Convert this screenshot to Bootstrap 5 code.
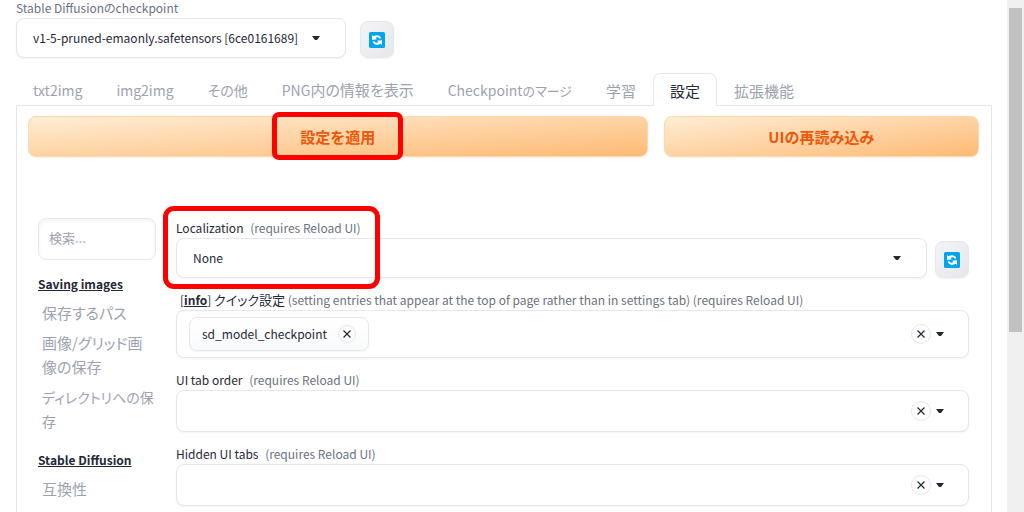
<!DOCTYPE html>
<html lang="ja">
<head>
<meta charset="utf-8">
<meta name="viewport" content="width=device-width, initial-scale=1">
<title>Stable Diffusion</title>
<link href="https://cdn.jsdelivr.net/npm/bootstrap@5.3.0/dist/css/bootstrap.min.css" rel="stylesheet">
<style>
  :root { --line: #e5e7eb; --ink: #1f2937; --muted: #6b7280; --faint: #9ca3af; }
  body { font-family: "Noto Sans CJK JP", sans-serif; font-size: 12px; line-height: 20px; color: var(--ink); font-feature-settings: "palt"; overflow: hidden; }
  .app { padding: 0 15px 0 16px; }
  .top-label { color: var(--muted); line-height: 16px; padding-bottom: 2px; }
  .field-box { border: 1px solid var(--line); border-radius: 8px; background-color: #fff; box-shadow: 0 1px 2px rgba(0,0,0,.05); }
  select.field-box { appearance: none; height: 40px; padding: 0 16px; color: var(--ink); background-repeat: no-repeat; background-size: 8px 5px; background-position: right 25px center;
    background-image: url("data:image/svg+xml,%3Csvg xmlns='http://www.w3.org/2000/svg' viewBox='0 0 8 5'%3E%3Cpath d='M0 0h8L5 4H3z' fill='%231f2937'/%3E%3C/svg%3E"); }
  .ckpt-row { gap: 14px; }
  .ckpt { width: 330px; }
  .tool { width: 34px; height: 37px; padding: 0; border: 1px solid var(--line); border-radius: 8px; background: linear-gradient(to bottom right, #f3f4f6, #e5e7eb); box-shadow: 0 1px 2px rgba(0,0,0,.05); flex: none; }
  .nav-tabs { margin-top: 15px; border-color: var(--line); --bs-nav-tabs-border-radius: 8px; }
  .nav-tabs .nav-link { padding: 5px 16px 3px; font-size: 14px; line-height: 23px; color: var(--faint); white-space: nowrap; }
  .nav-tabs .nav-link.kanji { font-size: 15px; }
  .nav-tabs .nav-link.active { color: var(--ink); border-color: var(--line) var(--line) #fff; }
  .mixed { font-size: 15px; line-height: 1; }
  .kana { font-size: 13px; line-height: 1; }
  .panel { border: solid var(--line); border-width: 0 1px; padding: 10px 12px 0 11px; }
  .primary { height: 41px; border: 1px solid #fed7aa; border-radius: 8px; padding: 0; background: linear-gradient(to bottom right, #ffedd5, #fdba74); color: #ea580c; font-weight: 600; font-size: 15px; box-shadow: 0 1px 2px rgba(0,0,0,.05); }
  .apply { flex: 621 1 0; }
  .reload { flex: 315 1 0; }
  .ring { position: absolute; border: 5px solid #f00; pointer-events: none; }
  .ring-apply { inset: -14px -28px -13px; border-radius: 7px; }
  .ring-locale { left: -13px; top: -12px; width: 217px; height: 83px; border-radius: 11px; }
  .settings { padding: 61px 10px 0; gap: 20px; }
  .side { width: 118px; flex: none; }
  .search { width: 100%; height: 42px; padding: 0 10px 4px; font-size: 13px; box-shadow: inset 0 2px 4px rgba(0,0,0,.05); }
  .search::placeholder { color: var(--faint); opacity: 1; }
  .group { font-size: 12px; font-weight: 600; line-height: 20px; text-decoration: underline; margin: 14px 0 4px; }
  .side a { display: block; padding: 3px 0 3px 4px; font-size: 15px; line-height: 24px; color: var(--faint); text-decoration: none; }
  .side a.long { font-size: 14px; }
  .form-rows { gap: 12px; }
  .field-label { display: block; line-height: 20px; white-space: nowrap; }
  .hint { color: var(--muted); margin-left: 4px; }
  .aside-text { color: var(--muted); }
  .field-label a { color: inherit; font-weight: 700; }
  .multi { min-height: 42px; padding: 0 22px 0 12px; gap: 3px; }
  .multi input { min-width: 0; border: 0; outline: 0; background: none; }
  .tall { min-height: 48px; }
  .token { height: 34px; padding: 0 12px; gap: 11px; border: 1px solid var(--line); border-radius: 8px; background: linear-gradient(#fff, #f9fafb); box-shadow: 0 1px 2px rgba(0,0,0,.05); }
  .round { width: 20px; height: 20px; padding: 0; border: 1px solid var(--line); border-radius: 50%; background: #fff; flex: none; }
  .round-sm { width: 18px; height: 18px; }
  .round svg, .tool svg, .arrow svg { display: block; margin: auto; }
  .arrow { border: 0; padding: 2px; background: none; width: 12px; }
  .track { width: 17px; flex: none; background: #f0f0f0; padding: 8px 2px 0; }
  .thumb { height: 324px; background: #c1c1c1; }
</style>
</head>
<body>
<svg class="d-none" aria-hidden="true">
  <symbol id="refresh" viewBox="0 0 16 16">
    <rect width="16" height="16" rx="1.500" fill="#00a4ef"/>
    <path d="M3 8V3l1.500 1.300C7 2.300 11.300 2.800 12.300 6.500h-2C9.500 4.900 7.700 4.700 6.500 5.900L8 7.200zM13 8.300V13l-1.500-1.200C9 13.800 4.700 13.200 3.700 9.500h2c.8 1.600 2.600 1.800 3.800.6L8 8.800z" fill="#fff"/>
  </symbol>
  <symbol id="cross" viewBox="0 0 10 10"><path d="M1.500 1.500l7 7M8.500 1.500l-7 7" stroke="#1f2937" stroke-width="1.200" fill="none"/></symbol>
  <symbol id="caret" viewBox="0 0 8 5"><path d="M0 0h8L5 4H3z" fill="#1f2937"/></symbol>
</svg>
<div class="d-flex vh-100">
  <main class="app d-flex flex-column flex-grow-1 overflow-hidden">
    <label class="top-label" for="ckpt">Stable Diffusionのcheckpoint</label>
    <div class="ckpt-row d-flex align-items-end">
      <select id="ckpt" class="field-box ckpt"><option>v1-5-pruned-emaonly.safetensors [6ce0161689]</option></select>
      <button class="tool" type="button" aria-label="更新"><svg width="16" height="16"><use href="#refresh"/></svg></button>
    </div>
    <ul class="nav nav-tabs flex-nowrap">
      <li class="nav-item"><a class="nav-link" href="#">txt2img</a></li>
      <li class="nav-item"><a class="nav-link" href="#">img2img</a></li>
      <li class="nav-item"><a class="nav-link" href="#">その他</a></li>
      <li class="nav-item"><a class="nav-link" href="#">PNG<span class="mixed">内の情報を表示</span></a></li>
      <li class="nav-item"><a class="nav-link" href="#">Checkpoint<span class="kana">のマージ</span></a></li>
      <li class="nav-item"><a class="nav-link kanji" href="#">学習</a></li>
      <li class="nav-item"><a class="nav-link kanji active" href="#" aria-current="page">設定</a></li>
      <li class="nav-item"><a class="nav-link kanji" href="#">拡張機能</a></li>
    </ul>
    <section class="panel flex-grow-1">
      <div class="d-flex gap-3">
        <button class="primary apply" type="button"><span class="position-relative">設定を適用<span class="ring ring-apply"></span></span></button>
        <button class="primary reload" type="button">UIの再読み込み</button>
      </div>
      <div class="settings d-flex">
        <nav class="side">
          <input class="field-box search" type="text" placeholder="検索..." aria-label="検索">
          <h2 class="group">Saving images</h2>
          <a href="#">保存するパス</a>
          <a href="#">画像/グリッド画像の保存</a>
          <a class="long" href="#">ディレクトリへの保存</a>
          <h2 class="group">Stable Diffusion</h2>
          <a href="#">互換性</a>
        </nav>
        <div class="form-rows d-flex flex-column flex-grow-1">
          <div class="position-relative d-flex align-items-end gap-2">
            <div class="flex-grow-1">
              <label class="field-label" for="locale">Localization <span class="hint">(requires Reload UI)</span></label>
              <select id="locale" class="field-box w-100"><option>None</option></select>
            </div>
            <button class="tool" type="button" aria-label="更新"><svg width="16" height="16"><use href="#refresh"/></svg></button>
            <span class="ring ring-locale"></span>
          </div>
          <div>
            <label class="field-label ps-1" for="quick">[<a href="#">info</a>] <span class="kana">クイック設定</span> <span class="aside-text">(setting entries that appear at the top of page rather than in settings tab) (requires Reload UI)</span></label>
            <div class="field-box multi tall d-flex align-items-center">
              <span class="token d-flex align-items-center">sd_model_checkpoint
                <button class="round round-sm" type="button" aria-label="削除"><svg width="10" height="10"><use href="#cross"/></svg></button></span>
              <input id="quick" class="flex-grow-1" type="text">
              <button class="round" type="button" aria-label="クリア"><svg width="10" height="10"><use href="#cross"/></svg></button>
              <button class="arrow" type="button" aria-label="開く"><svg width="8" height="5"><use href="#caret"/></svg></button>
            </div>
          </div>
          <div>
            <label class="field-label" for="order">UI tab order <span class="hint">(requires Reload UI)</span></label>
            <div class="field-box multi d-flex align-items-center">
              <input id="order" class="flex-grow-1" type="text">
              <button class="round" type="button" aria-label="クリア"><svg width="10" height="10"><use href="#cross"/></svg></button>
              <button class="arrow" type="button" aria-label="開く"><svg width="8" height="5"><use href="#caret"/></svg></button>
            </div>
          </div>
          <div>
            <label class="field-label" for="hidden">Hidden UI tabs <span class="hint">(requires Reload UI)</span></label>
            <div class="field-box multi d-flex align-items-center">
              <input id="hidden" class="flex-grow-1" type="text">
              <button class="round" type="button" aria-label="クリア"><svg width="10" height="10"><use href="#cross"/></svg></button>
              <button class="arrow" type="button" aria-label="開く"><svg width="8" height="5"><use href="#caret"/></svg></button>
            </div>
          </div>
        </div>
      </div>
    </section>
  </main>
  <div class="track" aria-hidden="true"><div class="thumb"></div></div>
</div>
<script src="https://cdn.jsdelivr.net/npm/bootstrap@5.3.0/dist/js/bootstrap.bundle.min.js"></script>
</body>
</html>
